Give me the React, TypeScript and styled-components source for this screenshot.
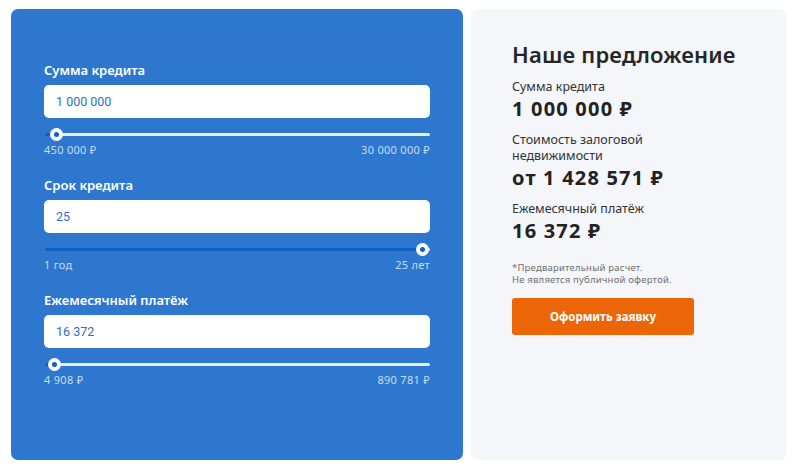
import React from "react";
import styled, { createGlobalStyle } from "styled-components";

const GlobalStyle = createGlobalStyle`
  html, body {
    margin: 0;
    padding: 0;
    background: #ffffff;
  }
  body {
    font-family: "Noto Sans", "DejaVu Sans", sans-serif;
  }
`;

type Field = {
  label: string;
  value: string;
  min: string;
  max: string;
  percent: number;
};

const fields: Field[] = [
  { label: "Сумма кредита", value: "1 000 000", min: "450 000 ₽", max: "30 000 000 ₽", percent: 3.2 },
  { label: "Срок кредита", value: "25", min: "1 год", max: "25 лет", percent: 98 },
  { label: "Ежемесячный платёж", value: "16 372", min: "4 908 ₽", max: "890 781 ₽", percent: 2.8 },
];

const Page = styled.div`
  display: grid;
  grid-template-columns: 452px 315px;
  gap: 8px;
  padding: 9px 0 0 11px;
  height: 451px;
`;

const Calculator = styled.div`
  background: #2d78ce;
  border-radius: 7px;
  padding: 52px 33px 0 33px;
  display: flex;
  flex-direction: column;
  gap: 19px;
`;

const Group = styled.div`
  display: flex;
  flex-direction: column;
`;

const Label = styled.div`
  color: #ffffff;
  font-size: 13px;
  font-weight: 600;
  line-height: 18px;
  margin-bottom: 6px;
`;

const Input = styled.div`
  background: #ffffff;
  border-radius: 5px;
  height: 33px;
  display: flex;
  align-items: center;
  padding: 0 12px;
  color: #2d6fc4;
  font-family: "Roboto", "Liberation Sans", sans-serif;
  font-size: 12.5px;
`;

const Track = styled.div`
  position: relative;
  height: 3px;
  margin-top: 15px;
  background: #e9eef5;
  border-radius: 2px;
`;

const Fill = styled.div`
  height: 100%;
  background: #0a61c6;
  border-radius: 2px;
`;

const Thumb = styled.div`
  position: absolute;
  top: 50%;
  width: 13px;
  height: 13px;
  margin-left: -6.5px;
  margin-top: -6.5px;
  border-radius: 50%;
  background: #ffffff;
  display: flex;
  align-items: center;
  justify-content: center;
  &::after {
    content: "";
    width: 5px;
    height: 5px;
    border-radius: 50%;
    background: #0a61c6;
  }
`;

const Range = styled.div`
  display: flex;
  justify-content: space-between;
  margin-top: 7px;
  color: #c9dcf2;
  font-size: 11px;
  letter-spacing: 0.3px;
  line-height: 14px;
`;

const Offer = styled.div`
  background: #f4f6fa;
  border-radius: 7px;
  padding: 30px 41px 0 41px;
  display: flex;
  flex-direction: column;
  color: #222222;
`;

const Title = styled.h2`
  margin: 0 0 10px 0;
  font-size: 22px;
  font-weight: 600;
  letter-spacing: 0.2px;
  line-height: 30px;
  color: #262626;
`;

const Caption = styled.div`
  font-size: 12.5px;
  line-height: 16px;
  color: #333333;
`;

const Amount = styled.div`
  font-size: 20px;
  font-weight: 700;
  letter-spacing: 1.2px;
  line-height: 27px;
  color: #222222;
  margin-bottom: 10px;
`;

const Note = styled.div`
  margin-top: 8px;
  font-size: 9.5px;
  letter-spacing: 0.2px;
  line-height: 12px;
  color: #6f6f6f;
`;

const Button = styled.button`
  margin-top: 12px;
  width: 182px;
  height: 37px;
  border: none;
  border-radius: 3px;
  background: #ec6608;
  color: #ffffff;
  font-family: inherit;
  font-size: 11.5px;
  font-weight: 700;
  cursor: pointer;
`;

function Slider({ field }: { field: Field }) {
  return (
    <Group>
      <Label>{field.label}</Label>
      <Input>{field.value}</Input>
      <Track>
        <Fill style={{ width: `${field.percent}%` }} />
        <Thumb style={{ left: `${field.percent}%` }} />
      </Track>
      <Range>
        <span>{field.min}</span>
        <span>{field.max}</span>
      </Range>
    </Group>
  );
}

export default function App() {
  return (
    <>
      <GlobalStyle />
      <Page>
        <Calculator>
          {fields.map((f) => (
            <Slider key={f.label} field={f} />
          ))}
        </Calculator>
        <Offer>
          <Title>Наше предложение</Title>
          <Caption>Сумма кредита</Caption>
          <Amount>1 000 000 ₽</Amount>
          <Caption>
            Стоимость залоговой
            <br />
            недвижимости
          </Caption>
          <Amount>от 1 428 571 ₽</Amount>
          <Caption>Ежемесячный платёж</Caption>
          <Amount>16 372 ₽</Amount>
          <Note>
            *Предварительный расчет.
            <br />
            Не является публичной офертой.
          </Note>
          <Button>Оформить заявку</Button>
        </Offer>
      </Page>
    </>
  );
}
